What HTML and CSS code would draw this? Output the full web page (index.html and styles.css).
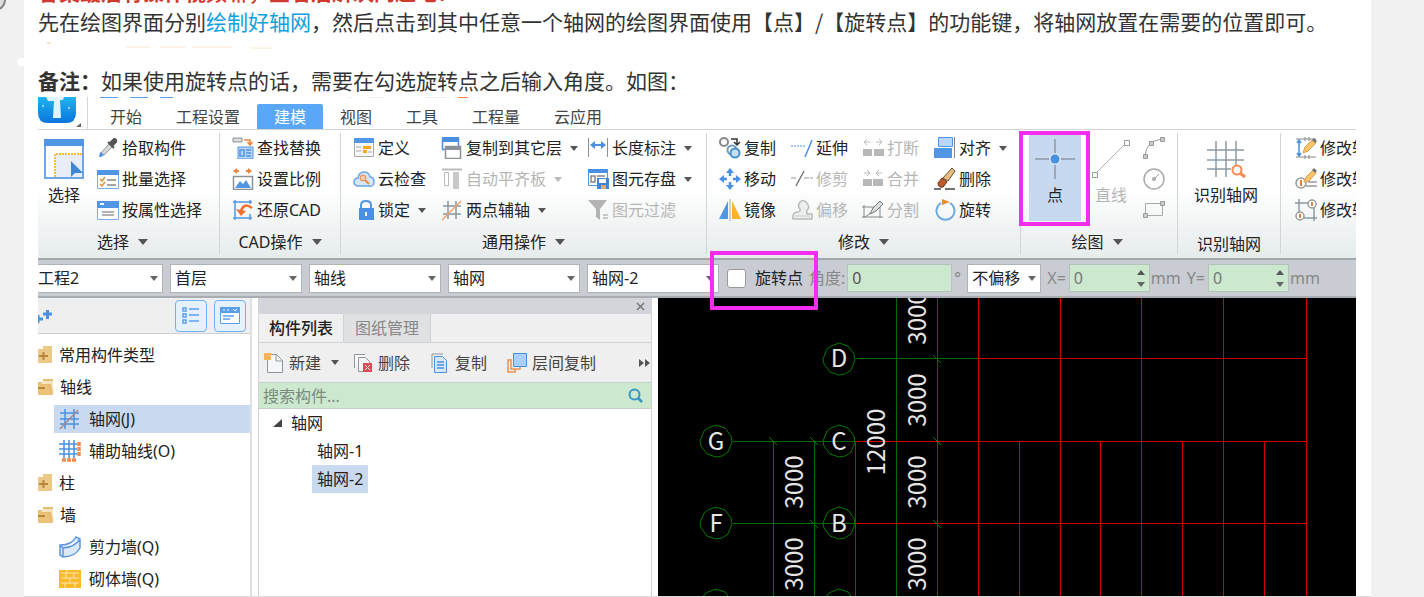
FILE: index.html
```html
<!DOCTYPE html>
<html lang="zh-CN">
<head>
<meta charset="utf-8">
<title>轴网绘制说明</title>
<link rel="stylesheet" href="styles.css">
</head>
<body>
<svg class="round-mark" width="8" height="12" aria-hidden="true"><circle cx="-5" cy="0" r="10" fill="#ddd" stroke="#888" stroke-width="2"/></svg>
<article class="article">
  <p class="para red">答案最后有操作视频嘛，查看后解决问题吧！</p>
  <p class="para">先在绘图界面分别<a href="#grid">绘制好轴网</a>，然后点击到其中任意一个轴网的绘图界面使用【点】/【旋转点】的功能键，将轴网放置在需要的位置即可。</p>
  <svg class="smear" width="300" height="29" aria-hidden="true"><path d="M9 7h4" stroke="#f3cf9c"/><path d="M88 11h24M122 11h26M154 11h40M212 12h22" stroke="#fae8cf"/></svg>
  <p class="para"><b>备注：</b>如果使用旋转点的话，需要在勾选旋转点之后输入角度。如图：</p>

  <section class="app">
    <header class="titlebar">
      <svg class="logo" width="55" height="32" aria-hidden="true">
        <defs><linearGradient id="lg" x1="0" y1="0" x2="0" y2="1"><stop offset="0" stop-color="#20b4ee"/><stop offset="1" stop-color="#0b73dc"/></linearGradient></defs>
        <path d="M0 0H38V16q0 10-10 10H10Q0 26 0 16z" fill="url(#lg)"/>
        <path d="M8 0h18l-1 3h-3l1 18h-8l1-17h-6z" fill="#dff4ff"/><circle cx="5" cy="9" r="1" fill="#bfe9ff"/><circle cx="31" cy="11" r="1" fill="#bfe9ff"/><path d="M43 26v4h-5z" fill="#666"/><path d="M49.5 0v32" stroke="#d6d6d6"/>
      </svg>
      <nav class="tabs">
        <button>开始</button><button>工程设置</button><button class="active">建模</button><button>视图</button><button>工具</button><button>工程量</button><button>云应用</button>
      </nav>
      <svg class="quick" width="440" height="2" aria-hidden="true"><path d="M62 0h18M92 0h18M122 0h13" stroke="#5a9de8" stroke-width="2"/><path d="M420 0h10" stroke="#f08a4a" stroke-width="2"/><path d="M310 0h4M330 0h16M388 0h20" stroke="#ddd"/></svg>
    </header>

    <div class="ribbon">
      <section class="group g-select">
        <div class="tools">
          <button class="big"><svg width="40" height="40" viewBox="0 0 40 40"><path d="M1 1h38v38H1z" fill="#fff" stroke="#6ea6e6" stroke-width="2"/><path d="M0 0h40v7H0z" fill="#5096e4"/><path d="M11 15h27v23H11z" fill="#e8edf7"/><path d="M11 38V15h27" fill="none" stroke="#f9bd3a" stroke-width="2" stroke-dasharray="2 1"/><path d="M27 22v16l4-4h8z" fill="#3f87d6"/></svg>选择</button>
          <div class="col">
            <button><svg class="i" viewBox="0 0 22 22"><path d="M4 16l8-9 3 3-8 8z" fill="#d5d9dc" stroke="#8a9298"/><path d="M2 20l1-5 4 3-3 2z" fill="#5096e4"/><path d="M11 5l6 6M13 6l4-4q3 0 2 3l-4 4z" fill="#555" stroke="#555" stroke-width="2"/></svg>拾取构件</button>
            <button><svg class="i" viewBox="0 0 22 22"><path d="M.5 2.500h21v18H.5z" fill="#fff" stroke="#7bade6"/><path d="M0 2h22v5H0z" fill="#5096e4"/><path d="M3 11l2 2 3-4M3 16l2 2 3-4" fill="none" stroke="#f08a3c" stroke-width="1.500"/><path d="M10 12h9M10 17h9" stroke="#888" stroke-width="1.500"/></svg>批量选择</button>
            <button><svg class="i" viewBox="0 0 22 22"><path d="M.5 2.500h21v18H.5z" fill="#fff" stroke="#7bade6"/><path d="M0 2h22v7H0z" fill="#5096e4"/><path d="M3 5h4" stroke="#fff" stroke-width="2"/><path d="M5 13h12M5 16h12" stroke="#999" stroke-width="1.500"/></svg>按属性选择</button>
          </div>
        </div>
        <button class="caption more">选择</button>
      </section>
      <section class="group g-cad">
        <div class="tools">
          <div class="col">
            <button><svg class="i" viewBox="0 0 22 22"><path d="M1 1h9v4H1z" fill="#ddd" stroke="#8a9298"/><path d="M12 3h6v4M15.500 5l2.500 3 2.500-3" fill="none" stroke="#f0843c" stroke-width="1.500"/><path d="M6 10h15v12H6z" fill="#b9d3f3" stroke="#5096e4"/><path d="M8 13h4v6H8zM14 13h5M14 16h5M14 19h5" fill="none" stroke="#5096e4" stroke-width="1.500"/></svg>查找替换</button>
            <button><svg class="i" viewBox="0 0 22 22"><path d="M2 3h5M14 3h5" stroke="#f0843c" stroke-width="2"/><path d="M5 0v6L1 3zM16 0v6l4-3z" fill="#f0843c"/><path d="M1.500 8.500h19v13h-19z" fill="#fff" stroke="#8a9298" stroke-width="1.500"/><path d="M3 20l5-7 3 3 3-4 5 8z" fill="#5096e4"/></svg>设置比例</button>
            <button><svg class="i" viewBox="0 0 22 22"><path d="M3 1v20M18 1v4M18 15v6M1 3h19M1 19h19" stroke="#5096e4" stroke-width="1.500"/><path d="M20 9q-8-6-11 3" fill="none" stroke="#f0702c" stroke-width="2.500"/><path d="M4 10l5 7 5-5z" fill="#f0702c"/></svg>还原CAD</button>
          </div>
        </div>
        <button class="caption more">CAD操作</button>
      </section>
      <section class="group g-common">
        <div class="tools">
          <div class="col">
            <button><svg class="i" viewBox="0 0 22 22"><path d="M1.500 1.500h19v18h-19z" fill="#f7f7f7" stroke="#aaa"/><path d="M1 1h20v5H1z" fill="#5096e4"/><path d="M10 9h8v3h-8zM10 13h4v3h-4z" fill="#f5a623"/><path d="M3 10h5M3 14h5M15 15h4" stroke="#aaa"/></svg>定义</button>
            <button><svg class="i" viewBox="0 0 22 22"><path d="M6 18q-5 0-5-4t4-4q1-6 6-6t6 5q4 0 4 5t-5 4z" fill="#d4e6fa" stroke="#6aa6e8" stroke-width="1.500"/><circle cx="10" cy="10" r="3" fill="#f7c9a8" stroke="#e58c50"/><path d="M12 12l4 4" stroke="#e58c50" stroke-width="2"/></svg>云检查</button>
            <button class="more"><svg class="i" viewBox="0 0 22 22"><path d="M8 10V6q0-4 5-4t5 4v4" fill="none" stroke="#5096e4" stroke-width="2"/><path d="M6 9h15v12H6z" fill="#4a90e2"/><path d="M13 13v4" stroke="#fff" stroke-width="2"/></svg>锁定</button>
          </div>
          <div class="col">
            <button class="more"><svg class="i" viewBox="0 0 22 22"><path d="M1.500 1.500h16v11h-16z" fill="#fff" stroke="#4a90e2" stroke-width="1.500"/><path d="M1 0h17v5H1z" fill="#4a90e2"/><path d="M4.500 9.500h15v12h-15z" fill="#fff" stroke="#8a9298" stroke-width="1.500"/><path d="M4 9h16v4H4z" fill="#8a9298"/></svg>复制到其它层</button>
            <button class="more" disabled><svg class="i" viewBox="0 0 22 22"><path d="M1 1.500h20" stroke="#bbb" stroke-width="2"/><path d="M3.500 4.500h4v13h-4z" fill="#fff" stroke="#bbb"/><path d="M12 4h6v17h-6z" fill="#c8c8c8"/></svg>自动平齐板</button>
            <button class="more"><svg class="i" viewBox="0 0 22 22"><path d="M7 2v18M15 2v18M2 7h18M2 15h18" stroke="#8796a0" stroke-width="1.500"/><path d="M1 21L20 2" stroke="#f0a06a" stroke-width="1.500"/></svg>两点辅轴</button>
          </div>
          <div class="col">
            <button class="more"><svg class="i" viewBox="0 0 22 22"><path d="M1.500 1v19M20.500 1v19" stroke="#8a9298"/><path d="M5 8h12" stroke="#4a90e2" stroke-width="2"/><path d="M8 4v8L3 8zM14 4v8l5-4z" fill="#4a90e2"/></svg>长度标注</button>
            <button class="more"><svg class="i" viewBox="0 0 22 22"><path d="M1.500 1.500h19v16h-19z" fill="#fff" stroke="#5096e4"/><path d="M1 1h20v4H1z" fill="#4a90e2"/><path d="M4 8h4v6H4zM10 8h8" fill="none" stroke="#888" stroke-width="1.500"/><path d="M10 10h12v11H10z" fill="#3f87d6"/><path d="M12 11h7v4h-7z" fill="#fff"/><path d="M14 17h5v4h-5z" fill="#f3a46c"/></svg>图元存盘</button>
            <button disabled><svg class="i" viewBox="0 0 22 22"><path d="M1 1h19l-7 9v11l-4-3v-8z" fill="#b4b4b4"/><path d="M16 16h5M16 19h5" stroke="#bbb" stroke-width="1.500"/></svg>图元过滤</button>
          </div>
        </div>
        <button class="caption more">通用操作</button>
      </section>
      <section class="group g-modify">
        <div class="tools">
          <div class="col">
            <button><svg class="i" viewBox="0 0 22 22"><circle cx="5" cy="5" r="4" fill="#fff" stroke="#888" stroke-width="2"/><path d="M12 2h6v5M15 5l3 3 3-3" fill="none" stroke="#333" stroke-width="1.500"/><circle cx="13" cy="13" r="4.500" fill="#fff" stroke="#6a9dc0" stroke-width="2"/><circle cx="16" cy="16" r="4.500" fill="#bfe0f8" stroke="#4a90c8" stroke-width="2"/></svg>复制</button>
            <button><svg class="i" viewBox="0 0 22 22"><path d="M11 3v5M11 14v5M3 11h5M14 11h5" stroke="#4a90e2" stroke-width="2.500"/><path d="M11 0l4 5H7zM11 22l4-5H7zM0 11l5-4v8zM22 11l-5-4v8z" fill="#4a90e2"/></svg>移动</button>
            <button><svg class="i" viewBox="0 0 22 22"><path d="M9 2v18H0z" fill="#5096e4"/><path d="M13 2v18h9z" fill="#f9b429"/><path d="M11 0v22" stroke="#aaa"/></svg>镜像</button>
          </div>
          <div class="col">
            <button><svg class="i" viewBox="0 0 22 22"><path d="M0 9h15" stroke="#4a90e2" stroke-dasharray="2 1"/><path d="M14 20L21 3" stroke="#4a90e2" stroke-width="1.500"/></svg>延伸</button>
            <button disabled><svg class="i" viewBox="0 0 22 22"><path d="M0 10h6M13 10h9" stroke="#999" stroke-dasharray="5 1"/><path d="M5 18L13 3" stroke="#777" stroke-width="1.500"/></svg>修剪</button>
            <button disabled><svg class="i" viewBox="0 0 22 22"><path d="M2 20h19v-5h-5q-1-2 1-5t-2-7q-3-3-6 0-3 4 0 7 1 3-3 3-5 1-4 7z" fill="#eee" stroke="#bbb" stroke-width="1.500"/><path d="M4 17h15" stroke="#ccc"/></svg>偏移</button>
          </div>
          <div class="col">
            <button disabled><svg class="i" viewBox="0 0 22 22"><path d="M1 12h9v7H1zM12 12h10v7H12z" fill="#b8b8b8"/><path d="M2 5h6M14 5h6M5 2L2 5l3 3M17 2l3 3-3 3" stroke="#bbb" fill="none"/></svg>打断</button>
            <button disabled><svg class="i" viewBox="0 0 22 22"><path d="M1 11h9v7H1zM11 11h10v7H11z" fill="#b8b8b8"/><path d="M2 5h6M14 5h6M5 2l3 3-3 3M17 2l-3 3 3 3" stroke="#bbb" fill="none"/></svg>合并</button>
            <button disabled><svg class="i" viewBox="0 0 22 22"><path d="M2 6v13M18 7v12M0 8h14M0 18h21M3 18l15-10" stroke="#888" fill="none"/><path d="M8 15l3-6 7-7 3 3-7 7z" fill="#ddd" stroke="#777"/></svg>分割</button>
          </div>
          <div class="col">
            <button class="more"><svg class="i" viewBox="0 0 22 22"><path d="M4.500.5h14v9h-14z" fill="#b9d7fb" stroke="#5096e4"/><path d="M0 11h18v10H0z" fill="#5096e4"/><path d="M20.500 0v21" stroke="#888"/></svg>对齐</button>
            <button><svg class="i" viewBox="0 0 22 22"><path d="M9 10l9-10 3 3-7 10z" fill="#e7bd83" stroke="#6b4b2c"/><path d="M4 15l4-5 5 4-4 5q-5 1-5-4z" fill="#c0592b" stroke="#69331c"/><path d="M0 21h7M11 21h10" stroke="#444" stroke-width="1.500"/></svg>删除</button>
            <button><svg class="i" viewBox="0 0 22 22"><path d="M7 4a9 9 0 1 0 9 0" fill="none" stroke="#6fa9df" stroke-width="2"/><path d="M8 0v6l8-3z" fill="#e88a2e"/></svg>旋转</button>
          </div>
        </div>
        <button class="caption more">修改</button>
      </section>
      <section class="group g-draw">
        <div class="tools">
          <button class="big point"><svg width="40" height="40" viewBox="0 0 40 40"><path d="M20 0v40M0 20h40" stroke="#8d98a8" stroke-width="1.500"/><circle cx="20" cy="20" r="6" fill="#d9e6f7"/><circle cx="20" cy="20" r="4.500" fill="#4a90e2"/></svg>点</button>
          <button class="big" disabled><svg width="40" height="40" viewBox="0 0 40 40"><path d="M4 35L35 4" stroke="#b0b0b0"/><path d="M1.500 33.500h5v5h-5zM33.500 1.500h5v5h-5z" fill="#fff" stroke="#999"/></svg>直线</button>
          <div class="col shapes">
            <button aria-label="弧" disabled><svg class="i" viewBox="0 0 22 22"><path d="M2 19Q3 4 19 2" fill="none" stroke="#999"/><path d="M.5 17.500h4v4h-4zM6.500 4.500h4v4h-4zM17.500.5h4v4h-4z" fill="#ccc" stroke="#999"/></svg></button>
            <button aria-label="圆" disabled><svg class="i" viewBox="0 0 22 22"><circle cx="11" cy="11" r="10" fill="none" stroke="#aaa" stroke-width="1.500"/><path d="M11 11l5-5" stroke="#999"/><circle cx="11" cy="11" r="2" fill="#aaa"/></svg></button>
            <button aria-label="矩形" disabled><svg class="i" viewBox="0 0 22 22"><path d="M2.500 4.500h17v12h-17z" fill="none" stroke="#aaa"/><path d="M.5 14.500h4v4h-4zM17.500 2.500h4v4h-4z" fill="#ccc" stroke="#999"/></svg></button>
          </div>
        </div>
        <button class="caption more">绘图</button>
      </section>
      <section class="group g-detect">
        <div class="tools">
          <button class="big"><svg width="40" height="40" viewBox="0 0 40 40"><path d="M10 2v36M20 2v36M30 2v24M1 11h37M1 21h37M1 30h24" stroke="#8f9ba3" stroke-width="1.500"/><circle cx="31" cy="31" r="4.500" fill="#fff" stroke="#f58a55" stroke-width="2"/><path d="M34 34l5 4" stroke="#f58a55" stroke-width="3"/></svg>识别轴网</button>
        </div>
        <button class="caption">识别轴网</button>
      </section>
      <section class="group g-edit">
        <div class="tools">
          <div class="col">
            <button><svg class="i" viewBox="0 0 22 22"><path d="M1 2h20M1 20h20M10 0v4M14 0v4M10 18v4M14 18v4" stroke="#888"/><path d="M4 3v16M2 6l2-3 2 3M2 16l2 3 2-3" stroke="#4a90e2" stroke-width="1.500" fill="none"/><path d="M8 16l2-6 7-7 4 3-8 8z" fill="#f8c46c" stroke="#e0a04a"/><path d="M18 2l3 3" stroke="#777" stroke-width="3"/></svg>修改轴距</button>
            <button><svg class="i" viewBox="0 0 22 22"><circle cx="6" cy="15" r="5" fill="#fff" stroke="#999" stroke-width="1.500"/><path d="M6 12v6" stroke="#e08040" stroke-width="2"/><path d="M13 14h9M11 18h11" stroke="#999" stroke-width="1.500"/><path d="M9 14l2-5 7-7 3 3-7 8z" fill="#f8c46c" stroke="#e0a04a"/><path d="M18 1l3 3" stroke="#777" stroke-width="3"/></svg>修改轴号</button>
            <button><svg class="i" viewBox="0 0 22 22"><path d="M4 0v14M0 4h14M8 19h14M19 8v14" stroke="#8a9aa3" stroke-width="1.500"/><circle cx="17" cy="5" r="4" fill="#fff" stroke="#999" stroke-width="1.500"/><circle cx="5" cy="17" r="4" fill="#fff" stroke="#999" stroke-width="1.500"/><path d="M17 3v4M5 15v4" stroke="#e08040" stroke-width="2"/></svg>修改轴号位置</button>
          </div>
        </div>
      </section>
    </div>

    <div class="options">
      <div class="combo first"><select aria-label="工程"><option>工程2</option></select></div>
      <div class="combo"><select aria-label="楼层"><option>首层</option></select></div>
      <div class="combo"><select aria-label="类别"><option>轴线</option></select></div>
      <div class="combo"><select aria-label="构件类型"><option>轴网</option></select></div>
      <div class="combo"><select aria-label="构件"><option>轴网-2</option></select></div>
      <label class="rotate"><input type="checkbox">旋转点</label>
      <label class="dim angle" for="angle">角度:</label><input class="num wide" id="angle" value="0"><span class="dim deg">°</span>
      <div class="combo short"><select aria-label="偏移"><option>不偏移</option></select></div>
      <label class="dim axis" for="ox">X=</label><span class="spin"><input class="num" id="ox" value="0"></span><span class="dim unit">mm</span>
      <label class="dim axis" for="oy">Y=</label><span class="spin"><input class="num" id="oy" value="0"></span><span class="dim unit">mm</span>
    </div>

    <div class="workspace">
      <aside class="tree">
        <div class="tree-head">
          <svg width="16" height="22" viewBox="0 0 16 22" aria-hidden="true"><path d="M0 10v8M0 14h5M5 9h9M9.500 5v9" stroke="#4a90e2" stroke-width="3"/></svg>
          <button aria-label="列表"><svg width="20" height="20" viewBox="0 0 20 20"><path d="M2 2h3v3H2zM2 8h3v3H2zM2 14h3v3H2z" fill="#fff" stroke="#5a9fee" stroke-width="1.500"/><path d="M8 3h10M8 9h10M8 15h10" stroke="#5a9fee" stroke-width="1.500"/></svg></button>
          <button aria-label="窗口"><svg width="20" height="20" viewBox="0 0 20 20"><path d="M.5 1.500h19v16H.5z" fill="#fff" stroke="#5a9fee"/><path d="M0 1h20v6H0z" fill="#5a9fee"/><path d="M3 4h2M7 4h2M13 3l2 2 2-2" stroke="#fff" fill="none"/><path d="M3 10h11M3 13h7" stroke="#5a9fee" stroke-width="1.500"/></svg></button>
        </div>
        <ul>
          <li><svg width="15" height="18" viewBox="0 0 15 18"><path d="M5 0h9v17H0V3h5z" fill="#ecc987"/><path d="M1 10h9M5.500 6v8" stroke="#b5863b" stroke-width="2"/></svg>常用构件类型</li>
          <li><svg width="16" height="18" viewBox="0 0 16 18"><path d="M5 1h10v16H0V4h5z" fill="#e6bd73"/><path d="M0 6h13l2 9V3H5L3 6z" fill="#f7e3bc"/><path d="M0 7h10l5 10H0z" fill="#ecc27a"/><path d="M0 10h7" stroke="#b5863b" stroke-width="2"/></svg>轴线</li>
          <li class="sub selected"><svg class="i" viewBox="0 0 22 22"><path d="M6 1v20M15 1v20M1 5h19M1 11h19M1 16h19" stroke="#4a90e2" stroke-width="1.500"/><path d="M1 21L19 2" stroke="#a8898a" stroke-width="1.500"/></svg>轴网(J)</li>
          <li class="sub"><svg class="i" viewBox="0 0 22 22"><path d="M5 0v18M10 0v18M15 0v18M0 4h18M0 9h18M0 14h18" stroke="#4a90e2" stroke-width="1.500"/><path d="M20 2v14M3 20h14" stroke="#ef8a50" stroke-width="3.500" stroke-dasharray="4 1"/></svg>辅助轴线(O)</li>
          <li><svg width="15" height="18" viewBox="0 0 15 18"><path d="M5 0h9v17H0V3h5z" fill="#ecc987"/><path d="M1 10h9M5.500 6v8" stroke="#b5863b" stroke-width="2"/></svg>柱</li>
          <li><svg width="16" height="18" viewBox="0 0 16 18"><path d="M5 1h10v16H0V4h5z" fill="#e6bd73"/><path d="M0 6h13l2 9V3H5L3 6z" fill="#f7e3bc"/><path d="M0 7h10l5 10H0z" fill="#ecc27a"/><path d="M0 10h7" stroke="#b5863b" stroke-width="2"/></svg>墙</li>
          <li class="sub"><svg class="i" viewBox="0 0 22 22"><path d="M1 9q12 0 16-8l4 2v9q-5 9-17 9l-3-2zM1 9l3 3v9M4 12Q16 11 21 3" fill="#dbe9fa" stroke="#5c97dc" stroke-width="1.500"/></svg>剪力墙(Q)</li>
          <li class="sub"><svg class="i" viewBox="0 0 22 22"><path d="M0 2h22v18H0z" fill="#f9b929"/><path d="M2 5h18M2 10h18M2 15h18M8 2v3M15 5v5M7 5v5M11 10v5M16 15v5M6 15v5" stroke="#fde9b8"/></svg>砌体墙(Q)</li>
        </ul>
      </aside>

      <section class="components">
        <div class="strip"><button aria-label="关闭"><svg width="9" height="9" viewBox="0 0 9 9"><path d="M1 1l7 7M8 1L1 8" stroke="#777" stroke-width="1.500"/></svg></button></div>
        <div class="panel-tabs"><button class="on">构件列表</button><button>图纸管理</button></div>
        <div class="panel-tools">
          <button class="more"><svg class="s" viewBox="0 0 20 20"><path d="M3.500 1.500h9l6 6v12h-15z" fill="#f6f7f8" stroke="#8c979f"/><path d="M12 1v7h7" fill="none" stroke="#8c979f"/><path d="M0 0h7v7H0z" fill="#f7b45a"/></svg>新建</button>
          <button><svg class="s" viewBox="0 0 20 20"><path d="M1.500 15V1.500H12M5.500 4.500h7l4 4v10h-11z" fill="#f6f7f8" stroke="#8c979f"/><path d="M10 10h9v9h-9z" fill="#dc4b53"/><path d="M12 12l5 5M17 12l-5 5" stroke="#fff"/></svg>删除</button>
          <button><svg class="s" viewBox="0 0 20 20"><path d="M2 15V1h11" fill="none" stroke="#8c979f"/><path d="M4.500 3.500h8l4 4v12h-12z" fill="#d6e7fb" stroke="#4a90e2"/><path d="M7 9h7M7 12h7M7 15h7" stroke="#4a90e2" stroke-width="1.500"/></svg>复制</button>
          <button><svg class="s" viewBox="0 0 20 20"><path d="M5 7H1v12h7v-3M4 8v8h9v-2" fill="none" stroke="#f0904c" stroke-width="1.500"/><path d="M6.500.5h13v13h-13z" fill="#a9cffa" stroke="#4a90e2"/></svg>层间复制</button>
          <button class="chev" aria-label="更多"><svg width="11" height="8" viewBox="0 0 11 8"><path d="M0 0l5 4-5 4zM6 0l5 4-5 4z" fill="#555"/></svg></button>
        </div>
        <div class="search"><input aria-label="搜索构件" placeholder="搜索构件..."><svg width="16" height="16" viewBox="0 0 16 16"><circle cx="6.500" cy="6.500" r="5" fill="none" stroke="#3a96c4" stroke-width="2"/><path d="M10 10l4 4" stroke="#3a96c4" stroke-width="2.500"/></svg></div>
        <ul>
          <li><svg width="9" height="8" viewBox="0 0 9 8"><path d="M9 0v8H0z" fill="#444"/></svg>轴网</li>
          <li class="leaf"><span>轴网-1</span></li>
          <li class="leaf"><span class="selected">轴网-2</span></li>
        </ul>
      </section>

      <div class="canvas" id="grid">
        <svg width="100%" height="100%" role="img" aria-label="轴网图">
          <defs><path id="bub" d="M0-16L9-13L15-5L16 1L12 11L6 15L0 16L-9 13L-15 5L-16 0L-12-10L-8-13Z"/><path id="tick" d="M-4-4L4 4"/></defs>
          <g fill="none" stroke="#006a00" stroke-width="1" shape-rendering="crispEdges">
            <path d="M238.500 0v600M279.500 0v143M115.500 143v457M156.500 143v457M198 60.500h122M75 143.500h122M75 225.500h122"/>
          </g>
          <g fill="none" stroke="#d00000" stroke-width="1" shape-rendering="crispEdges">
            <path d="M320 60.500h328M197 143.500h451M197 225.500h451M197.500 143v457M279.500 143v457M320.500 0v600M361.500 143v457M402.500 0v600M442.500 143v457M483.500 0v600M524.500 143v457M565.500 0v600M606.500 143v457M648.500 0v600"/>
          </g>
          <g fill="none" stroke="#007800">
            <use href="#bub" x="181" y="61"/><use href="#bub" x="58" y="143"/><use href="#bub" x="181" y="143"/><use href="#bub" x="58" y="225"/><use href="#bub" x="181" y="225"/><use href="#bub" x="58" y="307"/><use href="#bub" x="181" y="307"/>
            <use href="#tick" x="279" y="61"/><use href="#tick" x="279" y="143"/><use href="#tick" x="279" y="226"/><use href="#tick" x="115" y="143"/><use href="#tick" x="156" y="143"/><use href="#tick" x="156" y="226"/>
          </g>
          <g class="cad-text">
            <text x="181" y="69">D</text><text x="58" y="152">G</text><text x="181" y="152">C</text><text x="58" y="234">F</text><text x="181" y="234">B</text><text x="58" y="316">E</text><text x="181" y="316">A</text>
            <text transform="translate(268 20) rotate(-90)">3000</text><text transform="translate(268 102) rotate(-90)">3000</text><text transform="translate(268 184) rotate(-90)">3000</text><text transform="translate(268 266) rotate(-90)">3000</text>
            <text transform="translate(145 184) rotate(-90)">3000</text><text transform="translate(145 266) rotate(-90)">3000</text><text transform="translate(227 144) rotate(-90)">12000</text>
          </g>
        </svg>
      </div>
    </div>
  </section>
</article>
</body>
</html>
```

FILE: styles.css
```css
* { box-sizing: border-box; }
body {
  margin: 0;
  height: 100vh;
  overflow: hidden;
  background: #f1f1f1;
  color: #333;
  font: 16px/24px "Noto Sans", "Noto Sans CJK SC", sans-serif;
}
button, input, select { font: inherit; color: inherit; }
button { margin: 0; padding: 0; border: 0; background: none; white-space: nowrap; }
svg { flex: none; }
ul { margin: 0; padding: 0; list-style: none; }
.round-mark { position: absolute; left: 0; top: 0; }

.article {
  position: relative;
  display: flex;
  flex-direction: column;
  height: 100vh;
  margin: 0 53px 0 24px;
  padding: 0 15px 0 14px;
  background: #fff;
  border-bottom: 1px solid #ddd;
}
.article::before {
  content: "";
  position: absolute;
  left: -7px;
  top: 58px;
  width: 14px;
  height: 8px;
  border-radius: 4px;
  background: #fff;
}
.para {
  flex: none;
  margin: 0;
  font-size: 21px;
  line-height: 30px;
  white-space: nowrap;
  font-family: "Noto Sans CJK SC", sans-serif;
}
.para a { color: #10a0e0; text-decoration: none; }
.para.red { margin-top: -24px; color: #d03a2e; font-weight: bold; }
.smear { display: block; }

.app { flex: 1; display: flex; flex-direction: column; min-height: 0; margin-top: 2px; overflow: hidden; }
.titlebar { position: relative; display: flex; flex: none; height: 33px; border-bottom: 1px solid #d4d4d4; }
.quick { position: absolute; left: 0; top: 0; }
.tabs { display: flex; align-items: flex-end; }
.tabs button { height: 25px; padding: 0 17px; color: #444; line-height: 24px; }
.tabs .active { background: #5aa6f7; color: #fff; border-radius: 2px 2px 0 0; }

.ribbon {
  display: flex;
  flex: none;
  padding: 3px 0 4px;
  background: linear-gradient(#fff 45%, #e6ebeb);
  color: #222;
  overflow: hidden;
}
.group { flex: none; display: flex; flex-direction: column; border-right: 1px solid #d3d6d8; }
.group:last-child { border: 0; }
.tools { display: flex; height: 96px; }
.col { display: grid; grid-template-rows: repeat(3, 30px); row-gap: 1px; align-content: start; justify-items: start; }
.col button { display: flex; align-items: center; gap: 3px; height: 30px; }
.i { width: 22px; height: 22px; }
button:disabled { color: #b6b6b6; }
.big { display: flex; flex-direction: column; align-items: center; gap: 4px; padding-top: 6px; width: 52px; }
.more::after {
  content: "";
  margin-left: 5px;
  border: 4px solid transparent;
  border-top: 5px solid #555;
  border-bottom: 0;
}
.more:disabled::after { border-top-color: #bbb; }
.caption { display: flex; align-items: center; justify-content: center; height: 25px; }
.caption.more::after { margin-left: 9px; border-width: 6px 5px 0; }
.g-select { width: 182px; }
.g-select .tools { gap: 7px; }
.g-cad { width: 121px; padding-left: 12px; }
.g-select .caption, .g-cad .caption, .g-common .caption, .g-modify .caption, .g-draw .caption { margin-left: -12px; }
.g-common { width: 366px; padding-left: 12px; }
.g-common .tools { display: grid; grid-template-columns: 88px 146px auto; }
.g-modify { width: 314px; padding-left: 12px; }
.g-modify .tools { display: grid; grid-template-columns: 72px 71px 72px auto; }
.g-draw { width: 157px; padding-left: 8px; }
.g-draw .big:nth-child(2) { width: 60px; }
.point { position: relative; height: 88px; background: #c7d9f0; }
.point::before {
  content: "";
  position: absolute;
  inset: -2px -9px -5px -10px;
  border: 4px solid #f52df0;
}
.shapes { margin-left: 2px; }
.g-detect { width: 103px; }
.g-detect .big { width: 96px; }
.g-detect .caption { padding-top: 4px; }
.g-edit { padding-left: 14px; }

.options {
  display: flex;
  flex: none;
  align-items: center;
  height: 40px;
  border-top: 2px solid #a2a7ae;
  border-bottom: 2px solid #a8adb4;
  background: #c9ccd2;
}
.combo { position: relative; flex: none; width: 132px; margin-right: 7px; }
.combo::after, .spin::after {
  content: "";
  position: absolute;
  right: 5px;
  top: 12px;
  border: 4px solid transparent;
  border-top: 5px solid #666;
  border-bottom: 0;
  pointer-events: none;
}
.combo select {
  display: block;
  width: 100%;
  height: 29px;
  padding: 0 4px;
  border: 1px solid #b0b3b8;
  border-radius: 0;
  background: #fff;
  color: #222;
  appearance: none;
}
.combo.first { width: 125px; }
.combo.first select { padding: 0; border-left: 0; }
.combo.short { width: 74px; margin-right: 6px; }
.rotate { position: relative; display: flex; align-items: center; gap: 9px; color: #222; }
.rotate::after { content: ""; position: absolute; inset: -15px -15px -20px -16px; border: 4px solid #f52df0; }
.rotate input {
  appearance: none;
  width: 19px;
  height: 19px;
  margin: 0 0 0 1px;
  border: 1px solid #999;
  border-radius: 3px;
  background: #fff;
}
.dim { color: #888; }
.angle { margin-left: 6px; }
.axis { margin-right: 3px; }
.num { width: 81px; height: 28px; padding: 0 4px; border: 1px solid #b5c4b8; background: #cce8cf; color: #777; outline: 0; }
.num.wide { width: 105px; margin-left: 2px; color: #555; }
.deg { width: 15px; padding-left: 2px; }
.spin { position: relative; display: flex; }
.spin::before {
  content: "";
  position: absolute;
  right: 5px;
  top: 6px;
  border: 4px solid transparent;
  border-bottom: 5px solid #555;
  border-top: 0;
}
.spin::after { top: 18px; }
.unit { margin: 0 6px 0 1px; }

.workspace { display: flex; flex: 1; min-height: 0; }
.tree { flex: none; width: 214px; border-right: 2px solid #e0e1e4; color: #222; }
.tree-head {
  display: flex;
  align-items: center;
  gap: 7px;
  height: 36px;
  padding-right: 4px;
  background: #efefef;
  border-bottom: 1px solid #cfcfcf;
}
.tree-head > svg { margin-right: auto; }
.tree-head button {
  display: grid;
  place-items: center;
  width: 32px;
  height: 32px;
  border: 1px solid #6fb0f8;
  border-radius: 4px;
  background: #e6f1fe;
}
.tree ul { padding-top: 7px; }
.tree li { display: flex; align-items: center; gap: 6px; height: 28px; margin-bottom: 4px; white-space: nowrap; }
.tree .sub { margin-left: 16px; padding-left: 5px; gap: 8px; }
.selected { background: #c9d9ef; }

.components {
  display: flex;
  flex-direction: column;
  flex: none;
  width: 394px;
  margin: 0 6px;
  border: solid #d2d4d8;
  border-width: 0 1px;
  color: #222;
}
.strip { display: flex; justify-content: flex-end; align-items: center; height: 16px; padding-right: 6px; background: #d3d5da; }
.strip button { display: flex; }
.panel-tabs { display: flex; height: 29px; background: #f0f0f0; border-bottom: 1px solid #d0d2d5; }
.panel-tabs button { padding: 0 11px; background: #e0e1e2; color: #888; border-right: 1px solid #d0d2d5; }
.panel-tabs .on { padding: 0 10px; background: #f0f0f0; color: #222; font-weight: 500; }
.panel-tools { display: flex; align-items: center; gap: 14px; height: 39px; padding: 0 1px 0 5px; background: #efefef; color: #444; }
.panel-tools button { display: flex; align-items: center; gap: 5px; }
.panel-tools button:nth-child(n+3) { margin-left: 6px; }
.s { width: 20px; height: 20px; }
.panel-tools .chev:last-child { margin-left: auto; }
.search { display: flex; align-items: center; height: 27px; padding: 0 7px 0 4px; background: #cce8cf; border: solid #c4cfc8; border-width: 1px 0; }
.search input { flex: 1; min-width: 0; padding: 0; border: 0; background: none; outline: 0; }
.search input::placeholder { color: #7b8b7e; opacity: 1; }
.components li { display: flex; align-items: center; gap: 9px; height: 28px; padding-left: 14px; }
.components .leaf { padding-left: 53px; }
.leaf span { padding: 2px 5px; }

.canvas { flex: 1; min-width: 0; background: #000; overflow: hidden; }
.canvas svg { display: block; }
.cad-text { fill: #e6e6e6; font-family: "Noto Sans CJK SC", sans-serif; font-size: 24px; text-anchor: middle; }
```
